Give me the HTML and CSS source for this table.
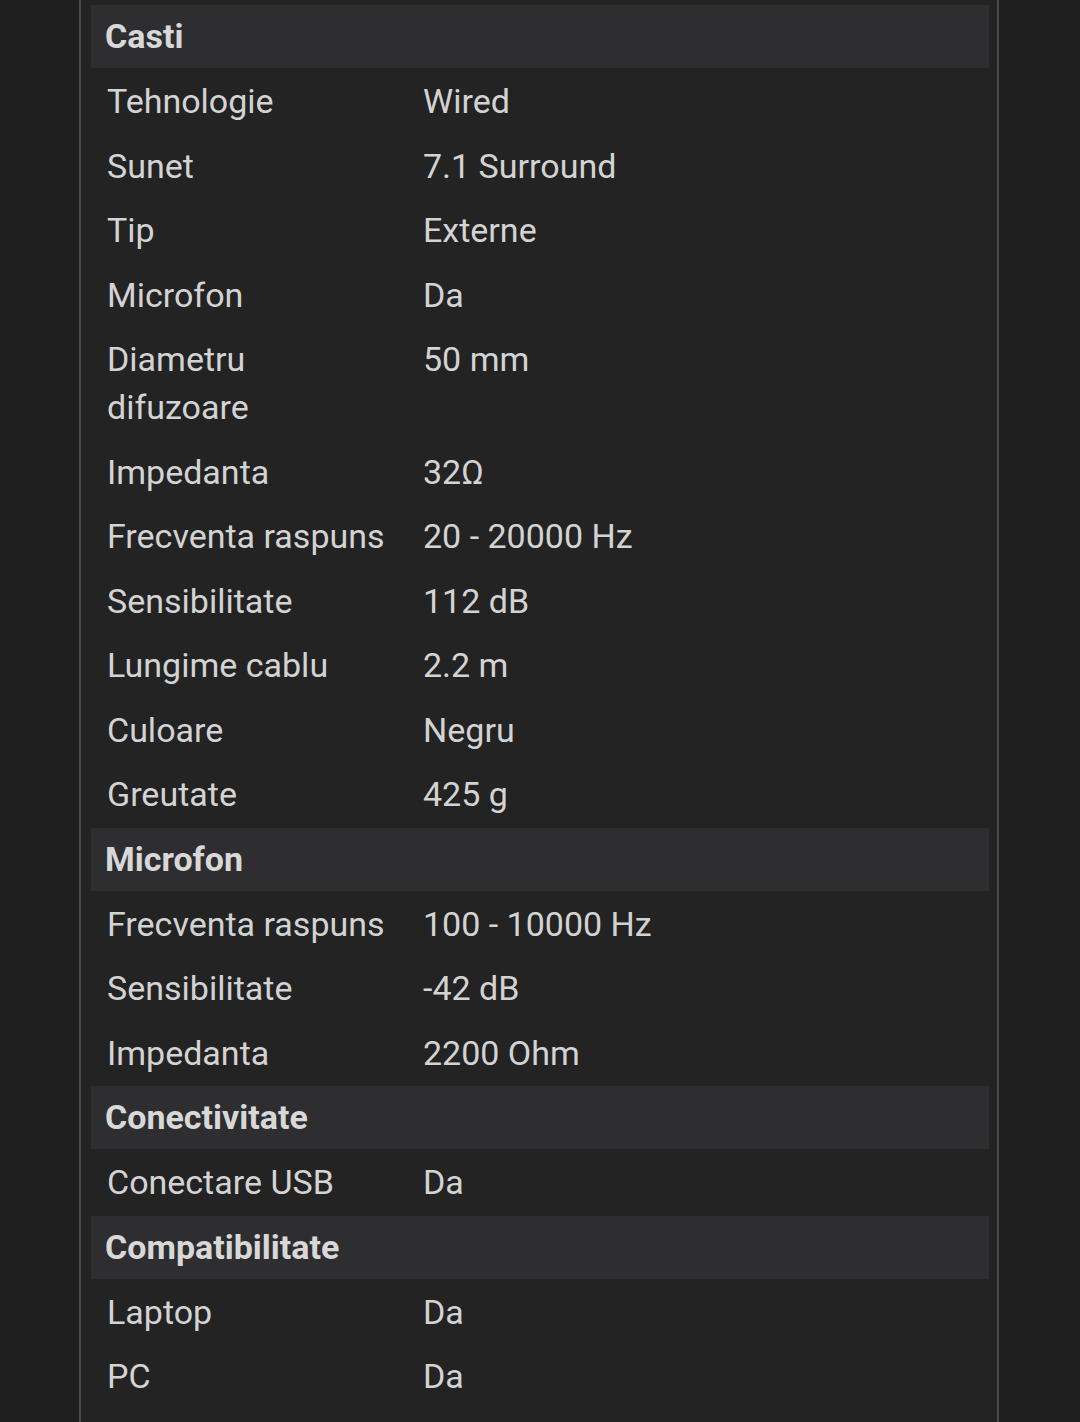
FILE: index.html
```html
<!DOCTYPE html>
<html lang="ro">
<head>
<meta charset="utf-8">
<link rel="stylesheet" href="styles.css">
</head>
<body>
<div class="panel">
  <section class="group">
    <div class="group-title">Casti</div>
    <div class="row"><div class="label">Tehnologie</div><div class="value">Wired</div></div>
    <div class="row"><div class="label">Sunet</div><div class="value">7.1 Surround</div></div>
    <div class="row"><div class="label">Tip</div><div class="value">Externe</div></div>
    <div class="row"><div class="label">Microfon</div><div class="value">Da</div></div>
    <div class="row"><div class="label">Diametru difuzoare</div><div class="value">50 mm</div></div>
    <div class="row"><div class="label">Impedanta</div><div class="value">32Ω</div></div>
    <div class="row"><div class="label">Frecventa raspuns</div><div class="value">20 - 20000 Hz</div></div>
    <div class="row"><div class="label">Sensibilitate</div><div class="value">112 dB</div></div>
    <div class="row"><div class="label">Lungime cablu</div><div class="value">2.2 m</div></div>
    <div class="row"><div class="label">Culoare</div><div class="value">Negru</div></div>
    <div class="row"><div class="label">Greutate</div><div class="value">425 g</div></div>
  </section>
  <section class="group">
    <div class="group-title">Microfon</div>
    <div class="row"><div class="label">Frecventa raspuns</div><div class="value">100 - 10000 Hz</div></div>
    <div class="row"><div class="label">Sensibilitate</div><div class="value">-42 dB</div></div>
    <div class="row"><div class="label">Impedanta</div><div class="value">2200 Ohm</div></div>
  </section>
  <section class="group">
    <div class="group-title">Conectivitate</div>
    <div class="row"><div class="label">Conectare USB</div><div class="value">Da</div></div>
  </section>
  <section class="group">
    <div class="group-title">Compatibilitate</div>
    <div class="row"><div class="label">Laptop</div><div class="value">Da</div></div>
    <div class="row"><div class="label">PC</div><div class="value">Da</div></div>
  </section>
</div>
</body>
</html>
```

FILE: styles.css
```css
html, body {
  margin: 0;
  padding: 0;
  background: #1f1f1f;
}
body {
  font-family: Roboto, "Liberation Sans", sans-serif;
  color: #d3d3d3;
  height: 1422px;
  overflow: hidden;
}
.panel {
  margin-left: 79px;
  width: 920px;
  min-height: 1422px;
  box-sizing: border-box;
  border-left: 2px solid #4a4a4a;
  border-right: 2px solid #4a4a4a;
  background: #232323;
  padding: 4px 8px 0 10px;
}
.group-title {
  height: 63px;
  margin: 1px 0;
  background: #2e2e30;
  padding-left: 14px;
  font-size: 34px;
  font-weight: 700;
  line-height: 63px;
  color: #d8d8d8;
}
.row {
  display: grid;
  grid-template-columns: 280px 1fr;
  column-gap: 36px;
  padding: 8px 0 8.5px 16px;
  font-size: 34px;
  line-height: 48px;
}
```
